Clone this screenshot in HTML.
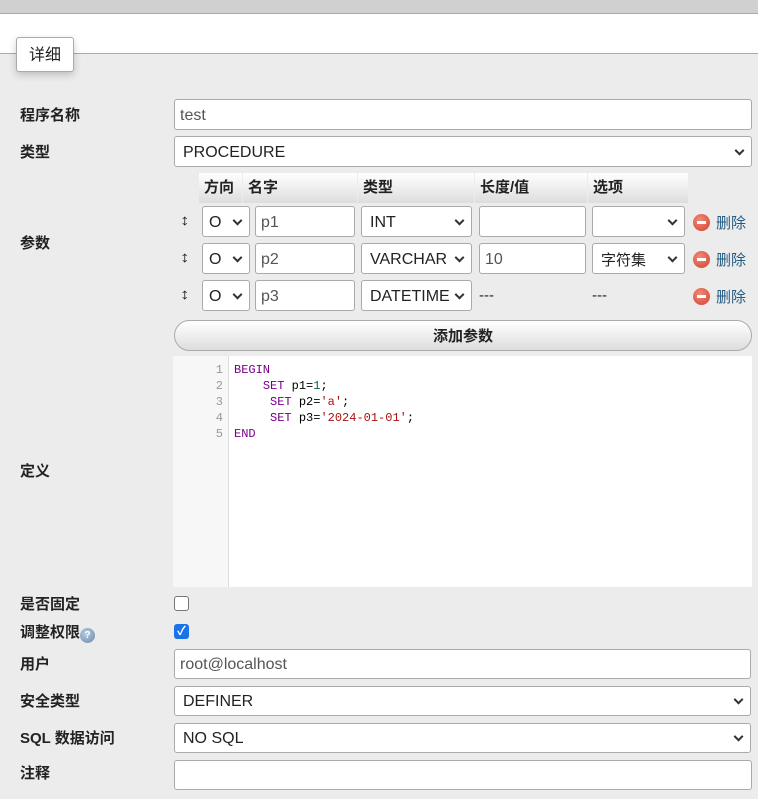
<!DOCTYPE html>
<html><head><meta charset="utf-8"><style>
*{box-sizing:border-box;margin:0;padding:0}
body{width:758px;height:799px;overflow:hidden;background:#ececec;font-family:"Liberation Sans","Noto Sans CJK SC",sans-serif;font-size:15px;color:#222;position:relative}
.a{position:absolute}
.lbl{position:absolute;left:20px;font-weight:bold;font-size:15px;line-height:20px}
.inp{position:absolute;background:#fff;border:1px solid #aaa;border-radius:3px;color:#555;font-size:16px;padding-left:5px;padding-top:2px;display:flex;align-items:center}
.sel{position:absolute;background:#fff;border:1px solid #aaa;border-radius:3px;color:#222;font-size:16px;padding-left:8px;padding-top:2px;display:flex;align-items:center;overflow:hidden;white-space:nowrap}
.sel::after{content:"";position:absolute;right:8px;top:50%;width:5px;height:5px;border-right:2px solid #333;border-bottom:2px solid #333;transform:translateY(-70%) rotate(45deg);background:#fff;box-shadow:0 0 0 4px #fff}
.th{position:absolute;top:173px;height:30px;background:linear-gradient(#fff,#ddd);font-weight:bold;font-size:15px;padding-left:5px;line-height:30px}
.del{position:absolute;left:693px;width:17px;height:17px;border-radius:50%;background:radial-gradient(circle at 40% 35%,#f08a7a,#d2412c)}
.del::after{content:"";position:absolute;left:4px;top:7px;width:9px;height:3px;background:#fff}
.dt{position:absolute;left:716px;color:#235a81;font-size:15px}
.arr{position:absolute;left:181px;font-size:15px;font-weight:bold;transform:scaleX(1.3)}
.code{font-family:"Liberation Mono","Noto Sans CJK SC",monospace;font-size:12px;line-height:16px}
</style></head><body>
<div class="a" style="left:0;top:0;width:758px;height:14px;background:#d0d0d0;border-bottom:1px solid #aaa"></div>
<div class="a" style="left:0;top:14px;width:758px;height:40px;background:#fff;border-bottom:1px solid #aaa"></div>
<div class="a" style="left:16px;top:37px;width:58px;height:35px;background:#fff;border:1px solid #aaa;border-radius:3px;box-shadow:0 3px 8px rgba(0,0,0,.2);font-size:16px;text-align:center;line-height:35px">详细</div>

<div class="lbl" style="top:106px">程序名称</div>
<div class="inp" style="left:174px;top:99px;width:578px;height:31px">test</div>
<div class="lbl" style="top:143px">类型</div>
<div class="sel" style="left:174px;top:136px;width:578px;height:31px">PROCEDURE</div>

<div class="lbl" style="top:234px">参数</div>
<div class="th" style="left:199px;width:43px">方向</div>
<div class="th" style="left:243px;width:114px">名字</div>
<div class="th" style="left:358px;width:116px">类型</div>
<div class="th" style="left:475px;width:112px">长度/值</div>
<div class="th" style="left:588px;width:100px">选项</div>

<div class="arr" style="top:212px">↕</div>
<div class="sel" style="left:202px;top:206px;width:48px;height:31px;padding-left:6px">O</div>
<div class="inp" style="left:255px;top:206px;width:100px;height:31px">p1</div>
<div class="sel" style="left:361px;top:206px;width:111px;height:31px">INT</div>
<div class="inp" style="left:479px;top:206px;width:107px;height:31px"></div>
<div class="sel" style="left:592px;top:206px;width:93px;height:31px"></div>
<div class="del" style="top:214px"></div><div class="dt" style="top:212px">删除</div>

<div class="arr" style="top:249px">↕</div>
<div class="sel" style="left:202px;top:243px;width:48px;height:31px;padding-left:6px">O</div>
<div class="inp" style="left:255px;top:243px;width:100px;height:31px">p2</div>
<div class="sel" style="left:361px;top:243px;width:111px;height:31px">VARCHAR</div>
<div class="inp" style="left:479px;top:243px;width:107px;height:31px">10</div>
<div class="sel" style="left:592px;top:243px;width:93px;height:31px;font-size:15px">字符集</div>
<div class="del" style="top:251px"></div><div class="dt" style="top:249px">删除</div>

<div class="arr" style="top:286px">↕</div>
<div class="sel" style="left:202px;top:280px;width:48px;height:31px;padding-left:6px">O</div>
<div class="inp" style="left:255px;top:280px;width:100px;height:31px">p3</div>
<div class="sel" style="left:361px;top:280px;width:111px;height:31px">DATETIME</div>
<div class="a" style="left:479px;top:287px;font-size:15px">---</div>
<div class="a" style="left:592px;top:287px;font-size:15px">---</div>
<div class="del" style="top:288px"></div><div class="dt" style="top:286px">删除</div>

<div class="a" style="left:174px;top:320px;width:578px;height:31px;border:1px solid #aaa;border-radius:16px;background:linear-gradient(#fff,#ddd);text-align:center;line-height:31px;font-weight:bold;font-size:15px">添加参数</div>

<div class="a" style="left:173px;top:356px;width:579px;height:231px;background:#fff"></div>
<div class="a code" style="left:173px;top:356px;width:56px;height:231px;background:#f7f7f7;border-right:1px solid #ddd;color:#999;text-align:right;padding:6px 5px 0 0">1<br>2<br>3<br>4<br>5</div>
<div class="a code" style="left:234px;top:362px;color:#000;white-space:pre"><span style="color:#708">BEGIN</span>
    <span style="color:#708">SET</span> p1=<span style="color:#164">1</span>;
     <span style="color:#708">SET</span> p2=<span style="color:#a11">'a'</span>;
     <span style="color:#708">SET</span> p3=<span style="color:#a11">'2024-01-01'</span>;
<span style="color:#708">END</span></div>
<div class="lbl" style="top:462px">定义</div>

<div class="lbl" style="top:595px">是否固定</div>
<div class="a" style="left:174px;top:596px;width:15px;height:15px;border:1px solid #777;border-radius:3px;background:#fff"></div>
<div class="lbl" style="top:623px">调整权限<span style="display:inline-block;width:15px;height:15px;border-radius:50%;background:radial-gradient(circle at 40% 35%,#bcd,#68a);color:#fff;font-size:10px;text-align:center;line-height:15px;vertical-align:-1px">?</span></div>
<div class="a" style="left:174px;top:624px;width:15px;height:15px;border-radius:3px;background:#1a73e8;color:#fff;font-size:12px;text-align:center;line-height:15px;font-weight:bold">✓</div>
<div class="lbl" style="top:655px">用户</div>
<div class="inp" style="left:174px;top:649px;width:577px;height:30px">root@localhost</div>
<div class="lbl" style="top:692px">安全类型</div>
<div class="sel" style="left:174px;top:686px;width:577px;height:30px">DEFINER</div>
<div class="lbl" style="top:729px">SQL 数据访问</div>
<div class="sel" style="left:174px;top:723px;width:577px;height:30px">NO SQL</div>
<div class="lbl" style="top:764px">注释</div>
<div class="inp" style="left:174px;top:760px;width:578px;height:30px"></div>
</body></html>
